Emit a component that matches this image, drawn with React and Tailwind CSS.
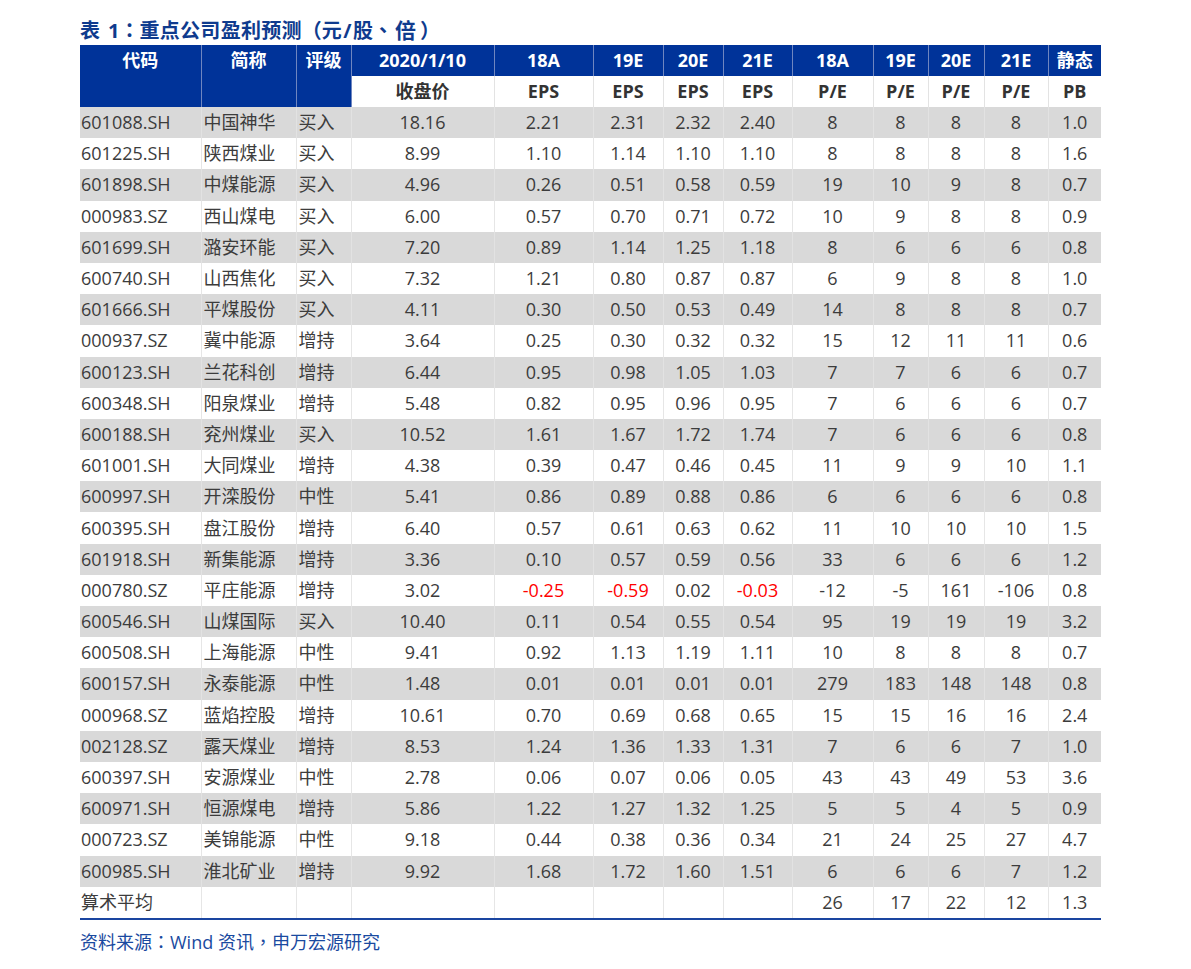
import React from "react";

const rows = [
  ["601088.SH","中国神华","买入","18.16","2.21","2.31","2.32","2.40","8","8","8","8","1.0"],
  ["601225.SH","陕西煤业","买入","8.99","1.10","1.14","1.10","1.10","8","8","8","8","1.6"],
  ["601898.SH","中煤能源","买入","4.96","0.26","0.51","0.58","0.59","19","10","9","8","0.7"],
  ["000983.SZ","西山煤电","买入","6.00","0.57","0.70","0.71","0.72","10","9","8","8","0.9"],
  ["601699.SH","潞安环能","买入","7.20","0.89","1.14","1.25","1.18","8","6","6","6","0.8"],
  ["600740.SH","山西焦化","买入","7.32","1.21","0.80","0.87","0.87","6","9","8","8","1.0"],
  ["601666.SH","平煤股份","买入","4.11","0.30","0.50","0.53","0.49","14","8","8","8","0.7"],
  ["000937.SZ","冀中能源","增持","3.64","0.25","0.30","0.32","0.32","15","12","11","11","0.6"],
  ["600123.SH","兰花科创","增持","6.44","0.95","0.98","1.05","1.03","7","7","6","6","0.7"],
  ["600348.SH","阳泉煤业","增持","5.48","0.82","0.95","0.96","0.95","7","6","6","6","0.7"],
  ["600188.SH","兖州煤业","买入","10.52","1.61","1.67","1.72","1.74","7","6","6","6","0.8"],
  ["601001.SH","大同煤业","增持","4.38","0.39","0.47","0.46","0.45","11","9","9","10","1.1"],
  ["600997.SH","开滦股份","中性","5.41","0.86","0.89","0.88","0.86","6","6","6","6","0.8"],
  ["600395.SH","盘江股份","增持","6.40","0.57","0.61","0.63","0.62","11","10","10","10","1.5"],
  ["601918.SH","新集能源","增持","3.36","0.10","0.57","0.59","0.56","33","6","6","6","1.2"],
  ["000780.SZ","平庄能源","增持","3.02","-0.25","-0.59","0.02","-0.03","-12","-5","161","-106","0.8"],
  ["600546.SH","山煤国际","买入","10.40","0.11","0.54","0.55","0.54","95","19","19","19","3.2"],
  ["600508.SH","上海能源","中性","9.41","0.92","1.13","1.19","1.11","10","8","8","8","0.7"],
  ["600157.SH","永泰能源","中性","1.48","0.01","0.01","0.01","0.01","279","183","148","148","0.8"],
  ["000968.SZ","蓝焰控股","增持","10.61","0.70","0.69","0.68","0.65","15","15","16","16","2.4"],
  ["002128.SZ","露天煤业","增持","8.53","1.24","1.36","1.33","1.31","7","6","6","7","1.0"],
  ["600397.SH","安源煤业","中性","2.78","0.06","0.07","0.06","0.05","43","43","49","53","3.6"],
  ["600971.SH","恒源煤电","增持","5.86","1.22","1.27","1.32","1.25","5","5","4","5","0.9"],
  ["000723.SZ","美锦能源","中性","9.18","0.44","0.38","0.36","0.34","21","24","25","27","4.7"],
  ["600985.SH","淮北矿业","增持","9.92","1.68","1.72","1.60","1.51","6","6","6","7","1.2"],
];

const widths = [121, 95, 55, 143, 99, 70, 60, 69, 81, 55, 56, 64, 53];

function P({ children }) {
  return (
    <span className="inline-block w-[1em] text-center [font-family:'Noto_Sans_CJK_TC',sans-serif]">{children}</span>
  );
}

export default function App() {
  const font = { fontFamily: '"Open Sans", "Noto Sans CJK SC", sans-serif' };
  return (
    <div className="w-[1191px] h-[969px] bg-white pt-[17px] pl-[80px]" style={font}>
      <div className="flex items-baseline text-[20px] leading-[26px] font-bold text-[#0f3b8e] whitespace-nowrap">
        <span>表</span>
        <span className="ml-[8px]">1</span>
        <P>：</P>
        <span className="tracking-[0.3px]">重点公司盈利预测</span>
        <P>（</P>
        <span>元</span>
        <span className="mx-[1.5px]">/</span>
        <span>股</span>
        <P>、</P>
        <span className="ml-[2px] text-[21px]">倍</span>
        <span className="ml-[4px]"><P>）</P></span>
      </div>
      <table className="table-fixed border-collapse w-[1021px] mt-[1px] text-[18px] text-[#3c3c3c]">
        <colgroup>
          {widths.map((w, i) => (
            <col key={i} style={{ width: w }} />
          ))}
        </colgroup>
        <thead>
          <tr className="h-[31px] bg-[#003399] text-white font-bold">
            <th rowSpan={2} className="align-top leading-[31px] font-bold border-r border-[#6f86c0]">代码</th>
            <th rowSpan={2} className="align-top leading-[31px] font-bold border-r border-[#6f86c0]">简称</th>
            <th rowSpan={2} className="align-top leading-[31px] font-bold border-r border-[#6f86c0]">评级</th>
            {["2020/1/10","18A","19E","20E","21E","18A","19E","20E","21E","静态"].map((t, i) => (
              <th key={i} className={`leading-[31px] font-bold ${i < 9 ? "border-r border-[#6f86c0]" : ""}`}>{t}</th>
            ))}
          </tr>
          <tr className="h-[31px] bg-white text-[#333333]">
            {["收盘价","EPS","EPS","EPS","EPS","P/E","P/E","P/E","P/E","PB"].map((t, i) => (
              <th key={i} className={`leading-[31px] font-bold ${i < 9 ? "border-r border-[#e3e3e3]" : ""}`}>{t}</th>
            ))}
          </tr>
        </thead>
        <tbody>
          {rows.map((r, ri) => (
            <tr key={ri} className={`h-[31.2px] ${ri % 2 === 0 ? "bg-[#d9d9d9]" : "bg-white"}`}>
              {r.map((c, ci) => {
                const red = ci >= 4 && ci <= 7 && c.startsWith("-");
                const align = ci === 0 ? "text-left pl-[1px]" : ci < 3 ? "text-left pl-[2px]" : "text-center";
                return (
                  <td
                    key={ci}
                    className={`p-0 leading-[31px] whitespace-nowrap ${align} ${ci < 12 ? "border-r" : ""} ${ri % 2 === 0 ? "border-[#e2e2e2]" : "border-[#e6e6e6]"} ${red ? "text-[#ff0000]" : ""}`}
                  >
                    {c}
                  </td>
                );
              })}
            </tr>
          ))}
          <tr className="h-[31px] bg-white border-b-[2px] border-[#1a45a0]">
            {["算术平均","","","","","","","","26","17","22","12","1.3"].map((c, ci) => (
              <td
                key={ci}
                className={`p-0 leading-[31px] whitespace-nowrap ${ci === 0 ? "text-left pl-[1px]" : "text-center"} ${ci < 12 ? "border-r border-[#e6e6e6]" : ""}`}
              >
                {c}
              </td>
            ))}
          </tr>
        </tbody>
      </table>
      <div className="mt-[8px] text-[18px] leading-[26px] text-[#1a4aa0] whitespace-nowrap">
        资料来源<P>：</P>Wind 资讯<P>，</P>申万宏源研究
      </div>
    </div>
  );
}
